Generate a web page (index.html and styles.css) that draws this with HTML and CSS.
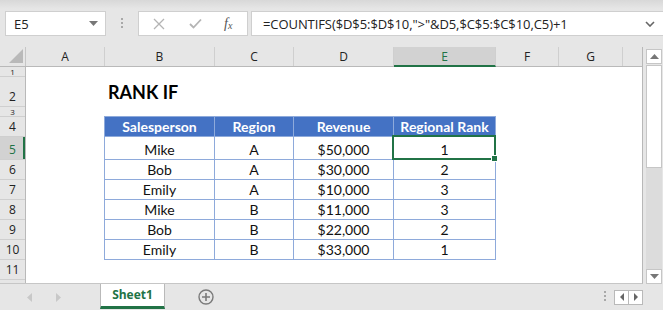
FILE: index.html
```html
<!DOCTYPE html>
<html lang="en">
<head>
    <meta charset="UTF-8">
    <title>RANK IF</title>
    <link rel="stylesheet" href="styles.css">
</head>
<body>

<div class="formula-bar">
    <div class="namebox">
        <span>E5</span>
        <svg class="caret" width="9" height="5" viewBox="0 0 9 5"><path d="M0 0 H9 L4.5 5 Z" fill="#777"/></svg>
    </div>
    <div class="grip"><i></i><i></i><i></i></div>
    <div class="fx-buttons">
        <svg width="12" height="12" viewBox="0 0 12 12"><path d="M1 1 L11 11 M11 1 L1 11" stroke="#b4b4b4" stroke-width="1.3" fill="none"/></svg>
        <svg width="13" height="11" viewBox="0 0 13 11"><path d="M1 6 L4.5 9.5 L12 1.5" stroke="#b4b4b4" stroke-width="1.8" fill="none"/></svg>
        <span class="fx">f<sub>x</sub></span>
    </div>
    <div class="formula">
        <span>=COUNTIFS($D$5:$D$10,"&gt;"&amp;D5,$C$5:$C$10,C5)+1</span>
        <svg class="chev" width="10" height="6" viewBox="0 0 10 6"><path d="M1 1 L5 5 L9 1" stroke="#666" stroke-width="1.6" fill="none"/></svg>
    </div>
</div>

<div class="workarea">
    <div class="sheet">
        <div class="col-heads">
            <div class="corner"><svg width="14" height="14" viewBox="0 0 14 14"><path d="M14 0 V14 H0 Z" fill="#b9b9b9"/></svg></div>
            <div class="ch w-a">A</div>
            <div class="ch w-b">B</div>
            <div class="ch w-c">C</div>
            <div class="ch w-d">D</div>
            <div class="ch w-e active">E</div>
            <div class="ch w-f">F</div>
            <div class="ch w-g">G</div>
            <div class="ch w-h"></div>
        </div>
        <div class="body">
            <div class="row-heads">
                <div class="rh h10">1</div>
                <div class="rh h30">2</div>
                <div class="rh h10">3</div>
                <div class="rh h20">4</div>
                <div class="rh h23 active">5</div>
                <div class="rh h20">6</div>
                <div class="rh h20">7</div>
                <div class="rh h20">8</div>
                <div class="rh h20">9</div>
                <div class="rh h20">10</div>
                <div class="rh h20">11</div>
            </div>
            <div class="cells">
                <div class="title-row">RANK IF</div>
                <div class="gap-row"></div>
                <div class="rank-table">
                    <div class="th">Salesperson</div>
                    <div class="th">Region</div>
                    <div class="th">Revenue</div>
                    <div class="th">Regional Rank</div>

                    <div class="td tall">Mike</div>
                    <div class="td tall">A</div>
                    <div class="td tall">$50,000</div>
                    <div class="td tall selected">1<span class="handle"></span></div>

                    <div class="td">Bob</div>
                    <div class="td">A</div>
                    <div class="td">$30,000</div>
                    <div class="td">2</div>

                    <div class="td">Emily</div>
                    <div class="td">A</div>
                    <div class="td">$10,000</div>
                    <div class="td">3</div>

                    <div class="td">Mike</div>
                    <div class="td">B</div>
                    <div class="td">$11,000</div>
                    <div class="td">3</div>

                    <div class="td">Bob</div>
                    <div class="td">B</div>
                    <div class="td">$22,000</div>
                    <div class="td">2</div>

                    <div class="td">Emily</div>
                    <div class="td">B</div>
                    <div class="td">$33,000</div>
                    <div class="td">1</div>
                </div>
            </div>
        </div>
    </div>
    <div class="vscroll">
        <div class="sbtn"><svg width="9" height="5" viewBox="0 0 9 5"><path d="M0 5 H9 L4.5 0 Z" fill="#777"/></svg></div>
        <div class="thumb"></div>
        <div class="track"></div>
        <div class="sbtn"><svg width="9" height="5" viewBox="0 0 9 5"><path d="M0 0 H9 L4.5 5 Z" fill="#777"/></svg></div>
    </div>
</div>

<div class="tabbar">
    <div class="nav">
        <svg width="5" height="9" viewBox="0 0 5 9"><path d="M5 0 V9 L0 4.5 Z" fill="#c8c8c8"/></svg>
        <svg width="5" height="9" viewBox="0 0 5 9"><path d="M0 0 V9 L5 4.5 Z" fill="#c8c8c8"/></svg>
    </div>
    <div class="tab">Sheet1</div>
    <svg class="add" width="16" height="16" viewBox="0 0 16 16">
        <circle cx="8" cy="8" r="7" stroke="#7a7a7a" stroke-width="1.4" fill="none"/>
        <path d="M8 4 V12 M4 8 H12" stroke="#7a7a7a" stroke-width="1.6"/>
    </svg>
    <div class="spacer"></div>
    <div class="grip"><i></i><i></i><i></i></div>
    <div class="hbtns">
        <div class="hbtn"><svg width="4" height="8" viewBox="0 0 4 8"><path d="M4 0 V8 L0 4 Z" fill="#666"/></svg></div>
        <div class="hbtn"><svg width="4" height="8" viewBox="0 0 4 8"><path d="M0 0 V8 L4 4 Z" fill="#666"/></svg></div>
    </div>
</div>

</body>
</html>
```

FILE: styles.css
```css
body {
    margin: 0;
    width: 663px;
    height: 310px;
    overflow: hidden;
    background-color: #e6e6e6;
    font-family: "Open Sans", sans-serif;
    color: #222;
}

/* formula bar */
.formula-bar {
    height: 47px;
    box-sizing: border-box;
    padding: 11px 0 0 5px;
    display: flex;
    align-items: flex-start;
    background: linear-gradient(#d8d8d8, #e6e6e6 9px);
}
.namebox {
    width: 101px;
    height: 25px;
    box-sizing: border-box;
    background-color: white;
    border: 1px solid #cfcfcf;
    display: flex;
    align-items: center;
    justify-content: space-between;
    padding: 0 7px 0 8px;
    font-size: 13px;
}
.grip {
    width: 32px;
    display: flex;
    flex-direction: column;
    align-items: center;
    gap: 2px;
    padding-top: 7px;
}
.grip i {
    width: 2px;
    height: 2px;
    background-color: #a8a8a8;
}
.fx-buttons {
    width: 110px;
    height: 25px;
    box-sizing: border-box;
    background-color: white;
    border: 1px solid #cfcfcf;
    display: flex;
    align-items: center;
    padding-left: 14px;
    gap: 24px;
}
.fx {
    font-family: "Liberation Serif", serif;
    font-style: italic;
    font-size: 14px;
    color: #555;
    margin-left: -2px;
}
.fx sub {
    font-size: 10px;
    vertical-align: 0;
    position: relative;
    top: 1px;
}
.formula {
    margin-left: 3px;
    flex: 1;
    height: 25px;
    box-sizing: border-box;
    background-color: white;
    border: 1px solid #cfcfcf;
    border-right: none;
    display: flex;
    align-items: center;
    justify-content: space-between;
    padding: 0 8px 0 11px;
    font-size: 13px;
    letter-spacing: -0.08px;
    color: #222;
}

/* sheet */
.workarea {
    display: flex;
    height: 237px;
}
.sheet {
    width: 643px;
    box-sizing: border-box;
    border-right: 1px solid #b8b8b8;
    border-bottom: 1px solid #c6c6c6;
    background-color: white;
    display: flex;
    flex-direction: column;
}
.col-heads {
    display: flex;
    height: 20px;
    background-color: #e6e6e6;
    border-bottom: 1px solid #b9b9b9;
    box-sizing: border-box;
}
.corner {
    width: 26px;
    box-sizing: border-box;
    border-right: 1px solid #c6c6c6;
    display: flex;
    align-items: flex-end;
    justify-content: flex-end;
    padding: 0 2px 3px 0;
}
.ch {
    box-sizing: border-box;
    border-right: 1px solid #cfcfcf;
    font-size: 12px;
    text-align: center;
    line-height: 19px;
    color: #222;
}
.ch.active {
    background-color: #d2d2d2;
    color: #217346;
    border-bottom: 2px solid #217346;
    margin-bottom: -1px;
}
.w-a { width: 79px; }
.w-b { width: 110px; }
.w-c { width: 79px; }
.w-d { width: 100px; }
.w-e { width: 102px; }
.w-f { width: 63px; }
.w-g { width: 64px; }
.w-h { width: 19px; border-right: none; }

.body {
    display: flex;
    flex: 1;
}
.row-heads {
    width: 26px;
    background-color: #e6e6e6;
    border-right: 1px solid #b9b9b9;
    box-sizing: border-box;
}
.rh {
    box-sizing: border-box;
    border-bottom: 1px solid #cfcfcf;
    font-size: 12px;
    text-align: center;
    display: flex;
    align-items: flex-end;
    justify-content: center;
    overflow: hidden;
    line-height: 17px;
    padding-bottom: 1px;
}
.rh.h10 {
    align-items: center;
    font-size: 8px;
    line-height: 9px;
    padding: 0;
}
.rh.active {
    background-color: #d2d2d2;
    color: #217346;
    box-shadow: inset -2px 0 0 #217346;
}
.h10 { height: 10px; }
.h20 { height: 20px; }
.h23 { height: 23px; }
.h30 { height: 30px; }

.cells {
    flex: 1;
    font-family: Lato, sans-serif;
    font-size: 14px;
    color: #111;
}
.title-row {
    height: 40px;
    box-sizing: border-box;
    padding: 0 0 4px 82px;
    display: flex;
    align-items: flex-end;
    font-size: 18px;
    font-weight: bold;
    color: #000;
}
.gap-row {
    height: 10px;
}
.rank-table {
    margin-left: 78px;
    display: grid;
    grid-template-columns: 110px 79px 100px 102px;
    grid-template-rows: 20px 23px repeat(5, 20px);
    width: max-content;
    border-left: 1px solid #8eaadb;
    border-top: 1px solid #8eaadb;
    margin-top: -1px;
}
.th, .td {
    box-sizing: border-box;
    border-right: 1px solid #8eaadb;
    border-bottom: 1px solid #8eaadb;
    display: flex;
    align-items: flex-end;
    justify-content: center;
    padding-bottom: 1px;
}
.th {
    background-color: #4472c4;
    color: white;
    font-weight: bold;
}
.td.selected {
    position: relative;
}
.td.selected::before {
    content: "";
    position: absolute;
    left: -2px;
    top: -2px;
    right: -1px;
    bottom: -1px;
    border: 2px solid #217346;
}
.handle {
    position: absolute;
    right: -3px;
    bottom: -3px;
    width: 5px;
    height: 5px;
    background-color: #217346;
    border: 1px solid white;
}

/* vertical scrollbar */
.vscroll {
    width: 16px;
    margin-left: 3px;
    padding-top: 2px;
    display: flex;
    flex-direction: column;
}
.sbtn {
    height: 15px;
    box-sizing: border-box;
    background-color: white;
    border: 1px solid #c6c6c6;
    display: flex;
    align-items: center;
    justify-content: center;
}
.thumb {
    height: 103px;
    margin-top: 1px;
    box-sizing: border-box;
    background-color: white;
    border: 1px solid #c6c6c6;
}
.track {
    flex: 1;
    background-color: #dcdcdc;
}

/* sheet tabs */
.tabbar {
    height: 26px;
    display: flex;
    align-items: stretch;
}
.nav {
    width: 100px;
    display: flex;
    align-items: center;
    gap: 24px;
    padding-left: 27px;
    box-sizing: border-box;
}
.tab {
    width: 65px;
    box-sizing: border-box;
    background-color: white;
    border-left: 1px solid #b9b9b9;
    border-right: 1px solid #b9b9b9;
    border-bottom: 3px solid #217346;
    margin-bottom: 1px;
    color: #217346;
    font-weight: bold;
    font-size: 12px;
    text-align: center;
    line-height: 22px;
}
.add {
    align-self: center;
    margin-left: 33px;
}
.spacer {
    flex: 1;
}
.tabbar .grip {
    width: 18px;
    padding-top: 7px;
}
.hbtns {
    display: flex;
    align-self: center;
    margin-right: 20px;
    border: 1px solid #b9b9b9;
    background-color: white;
}
.hbtn {
    width: 13px;
    height: 13px;
    display: flex;
    align-items: center;
    justify-content: center;
}
.hbtn + .hbtn {
    border-left: 1px solid #b9b9b9;
}
```
